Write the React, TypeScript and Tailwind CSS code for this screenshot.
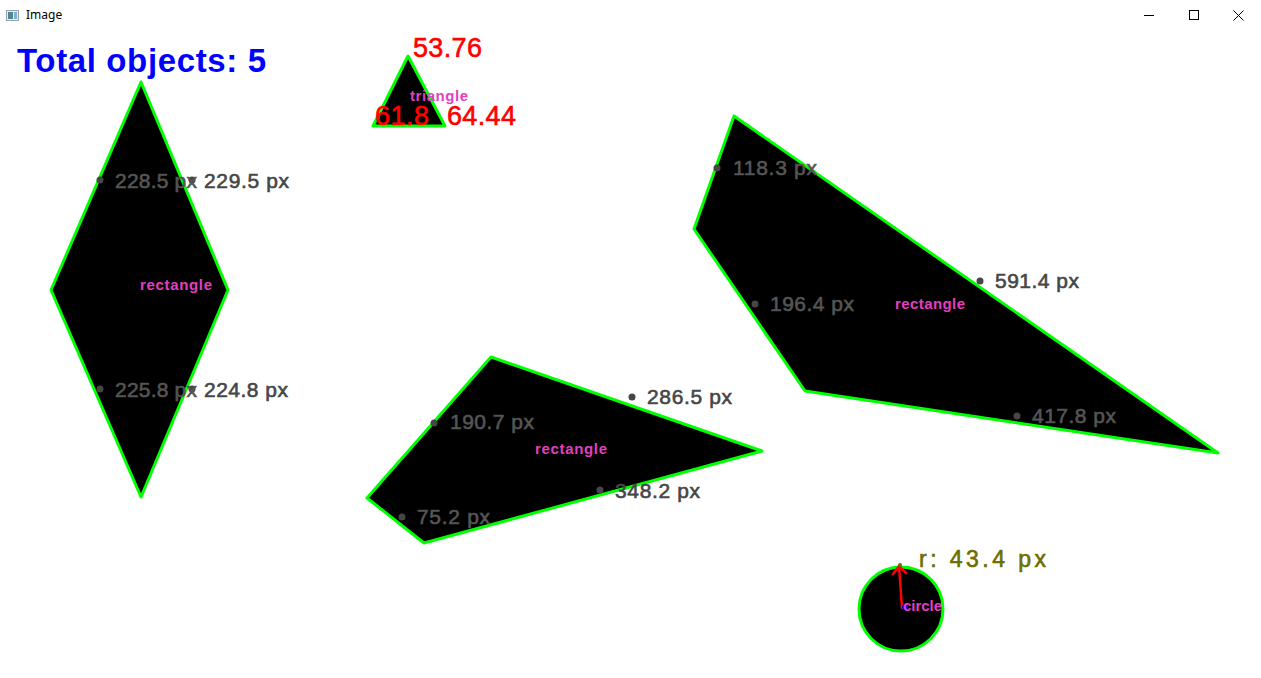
import React from 'react';

type Label = { x: number; y: number; w: number; text: string; color: string; size: number; bold?: boolean };

const FONT = '"Liberation Sans", Arial, sans-serif';

const GRAY_IN = '#555555';
const GRAY_OUT = '#464646';
const PINK = '#e23fc0';

// polygon outlines (screen coordinates)
const shapes = [
  '141,82 228,290 141,497 51,290',
  '408,56 445,126 373,126',
  '491,357 762,451 424,543 367,498',
  '734,116 1218,453 805,391 694,229',
];

// measurement dots
const dots = [
  [100, 180], [192, 180], [100, 389], [192, 389],
  [434, 423], [632, 397], [600, 490], [402, 517],
  [717, 168], [980, 281], [755, 304], [1017, 416],
];

const labels: Label[] = [
  { x: 17, y: 72, w: 249, text: 'Total objects: 5', color: '#0000ff', size: 33, bold: true },

  // diamond
  { x: 115, y: 188, w: 82, text: '228.5 px', color: GRAY_IN, size: 21 },
  { x: 204, y: 188, w: 85, text: '229.5 px', color: GRAY_OUT, size: 21 },
  { x: 115, y: 397, w: 82, text: '225.8 px', color: GRAY_IN, size: 21 },
  { x: 204, y: 397, w: 84, text: '224.8 px', color: GRAY_OUT, size: 21 },
  { x: 140, y: 290, w: 72, text: 'rectangle', color: PINK, size: 15, bold: true },

  // triangle
  { x: 413, y: 57, w: 69, text: '53.76', color: '#ff0000', size: 27 },
  { x: 375, y: 125, w: 54, text: '61.8', color: '#ff0000', size: 27 },
  { x: 447, y: 125, w: 69, text: '64.44', color: '#ff0000', size: 27 },
  { x: 410, y: 101, w: 58, text: 'triangle', color: PINK, size: 15, bold: true },

  // middle quad
  { x: 450, y: 429, w: 84, text: '190.7 px', color: GRAY_IN, size: 21 },
  { x: 647, y: 404, w: 85, text: '286.5 px', color: GRAY_OUT, size: 21 },
  { x: 615, y: 498, w: 85, text: '348.2 px', color: GRAY_OUT, size: 21 },
  { x: 417, y: 524, w: 73, text: '75.2 px', color: GRAY_IN, size: 21 },
  { x: 535, y: 454, w: 72, text: 'rectangle', color: PINK, size: 15, bold: true },

  // right quad
  { x: 733, y: 175, w: 84, text: '118.3 px', color: GRAY_IN, size: 21 },
  { x: 995, y: 288, w: 84, text: '591.4 px', color: GRAY_OUT, size: 21 },
  { x: 770, y: 311, w: 84, text: '196.4 px', color: GRAY_IN, size: 21 },
  { x: 1032, y: 423, w: 84, text: '417.8 px', color: GRAY_IN, size: 21 },
  { x: 895, y: 309, w: 70, text: 'rectangle', color: PINK, size: 15, bold: true },

  // circle
  { x: 919, y: 567, w: 127, text: 'r: 43.4 px', color: '#6d6d00', size: 23 },
];

function TitleBar() {
  return (
    <div className="flex h-[30px] items-center bg-white">
      <div className="ml-[6px] flex h-[11px] w-[13px] border border-[#9aa3ad] bg-[#e9edf1]">
        <div className="m-[1px] w-[5px] bg-[#4f8a8b]" />
        <div className="my-[1px] w-[3px] bg-[#7fb1d6]" />
      </div>
      <span className="ml-[7px] text-[12px] text-black" style={{ fontFamily: '"Noto Sans", sans-serif' }}>
        Image
      </span>
      <div className="ml-auto flex h-full">
        <div className="flex w-[45px] items-center justify-center">
          <div className="h-px w-[10px] bg-black" />
        </div>
        <div className="flex w-[45px] items-center justify-center">
          <div className="h-[10px] w-[10px] border border-black" />
        </div>
        <div className="flex w-[45px] items-center justify-center">
          <svg width="11" height="11" viewBox="0 0 11 11">
            <path d="M0.5 0.5 L10.5 10.5 M10.5 0.5 L0.5 10.5" stroke="#000" strokeWidth="1" />
          </svg>
        </div>
      </div>
    </div>
  );
}

function Canvas() {
  return (
    <svg className="block" width="1261" height="648" viewBox="0 30 1261 648">
      <rect x="0" y="30" width="1261" height="648" fill="#fff" />
      {shapes.map((pts) => (
        <polygon key={pts} points={pts} fill="#000" stroke="#00ff00" strokeWidth="3" strokeLinejoin="round" />
      ))}
      <circle cx="901" cy="609" r="42" fill="#000" stroke="#00ff00" strokeWidth="3" />

      {dots.map(([x, y]) => (
        <circle key={`${x}-${y}`} cx={x} cy={y} r="3.5" fill={GRAY_OUT} />
      ))}

      {/* radius arrow */}
      <path d="M902 608 L899 566 M899 566 L893 574 M899 566 L906 573" stroke="#ff0000" strokeWidth="2.5" fill="none" strokeLinecap="round" />
      <circle cx="900" cy="565" r="2" fill="#6d6d00" />
      <circle cx="905" cy="607" r="3" fill="#0000ff" />
      <text x="903" y="611" textLength="39" fill={PINK} fontSize="15" fontWeight="bold" style={{ fontFamily: FONT }}>
        circle
      </text>

      {labels.map((l) => (
        <text
          key={`${l.text}-${l.x}`}
          x={l.x}
          y={l.y}
          textLength={l.w}
          fill={l.color}
          stroke={l.bold ? 'none' : l.color}
          strokeWidth={l.bold ? 0 : 0.6}
          fontSize={l.size}
          fontWeight={l.bold ? 'bold' : 'normal'}
          style={{ fontFamily: FONT }}
        >
          {l.text}
        </text>
      ))}
    </svg>
  );
}

export default function App() {
  return (
    <div className="h-[678px] w-[1261px] overflow-hidden bg-white">
      <TitleBar />
      <Canvas />
    </div>
  );
}
